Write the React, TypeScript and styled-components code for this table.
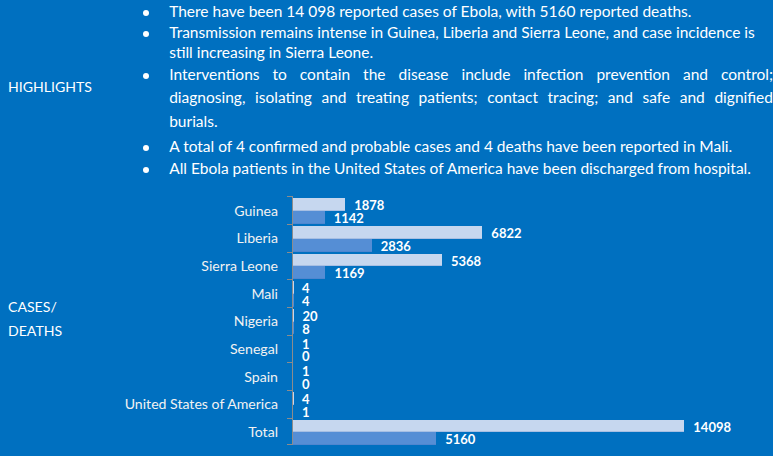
import styled, { createGlobalStyle } from 'styled-components';

const GlobalStyle = createGlobalStyle`
  html, body {
    margin: 0;
    padding: 0;
    background: #0070c0;
    overflow: hidden;
  }
  body {
    font-family: Lato, 'Open Sans', sans-serif;
    color: #ffffff;
  }
`;

const SCALE = 391.3 / 14098;

const cases: [string, number, number][] = [
  ['Guinea', 1878, 1142],
  ['Liberia', 6822, 2836],
  ['Sierra Leone', 5368, 1169],
  ['Mali', 4, 4],
  ['Nigeria', 20, 8],
  ['Senegal', 1, 0],
  ['Spain', 1, 0],
  ['United States of America', 4, 1],
  ['Total', 14098, 5160],
];

export default function App() {
  return (
    <Page>
      <GlobalStyle />
      <Section>
        <SideLabel $lift={2.85}>HIGHLIGHTS</SideLabel>
        <List>
          <Item $lh={20.5}>
            <Dot $lh={20.5} />
            <Text>
              <Line>There have been 14 098 reported cases of Ebola, with 5160 reported deaths.</Line>
            </Text>
          </Item>
          <Item $lh={20.5}>
            <Dot $lh={20.5} />
            <Text>
              <Line>Transmission remains intense in Guinea, Liberia and Sierra Leone, and case incidence is</Line>
              <Line>still increasing in Sierra Leone.</Line>
            </Text>
          </Item>
          <Item $lh={23.6} $gap={1.55}>
            <Dot $lh={23.6} />
            <Text>
              <Line $justify>Interventions to contain the disease include infection prevention and control;</Line>
              <Line $justify>diagnosing, isolating and treating patients; contact tracing; and safe and dignified</Line>
              <Line>burials.</Line>
            </Text>
          </Item>
          <Item $lh={22}>
            <Dot $lh={22} />
            <Text>
              <Line>A total of 4 confirmed and probable cases and 4 deaths have been reported in Mali.</Line>
            </Text>
          </Item>
          <Item $lh={22}>
            <Dot $lh={22} />
            <Text>
              <Line>All Ebola patients in the United States of America have been discharged from hospital.</Line>
            </Text>
          </Item>
        </List>
      </Section>

      <Section $top={17.3}>
        <SideLabel $lift={1.8}>
          CASES/
          <br />
          DEATHS
        </SideLabel>
        <Chart>
          {cases.map(([name, total, deaths], i) => (
            <Row key={name}>
              <Category>{name}</Category>
              <Plot $last={i === cases.length - 1}>
                <BarLine>
                  <Bar $kind="cases" style={{ width: total * SCALE }} />
                  <Value>{total}</Value>
                </BarLine>
                <BarLine>
                  <Bar $kind="deaths" style={{ width: deaths * SCALE }} />
                  <Value>{deaths}</Value>
                </BarLine>
              </Plot>
            </Row>
          ))}
        </Chart>
      </Section>
    </Page>
  );
}

const Page = styled.div`
  width: 773px;
  height: 456px;
  background: #0070c0;
  display: flex;
  flex-direction: column;
  overflow: hidden;
`;

const Section = styled.section<{ $top?: number }>`
  display: grid;
  grid-template-columns: 112px 1fr;
  padding-left: 8px;
  margin-top: ${(p) => p.$top ?? 0}px;
`;

const SideLabel = styled.div<{ $lift: number }>`
  align-self: center;
  font-size: 14.1px;
  line-height: 24px;
  padding-bottom: ${(p) => p.$lift * 2}px;
  white-space: nowrap;
`;

const List = styled.ul`
  list-style: none;
  margin: 0;
  padding: 1.35px 0 0 22.7px;
`;

const Item = styled.li<{ $lh: number; $gap?: number }>`
  display: flex;
  font-size: 15.5px;
  line-height: ${(p) => p.$lh}px;
  margin-bottom: ${(p) => p.$gap ?? 0}px;
`;

const Dot = styled.span<{ $lh: number }>`
  flex: 0 0 26.5px;

  &::before {
    content: '';
    display: block;
    width: 6px;
    height: 6px;
    border-radius: 50%;
    background: #ffffff;
    margin-top: ${(p) => p.$lh / 2 - 1.5}px;
  }
`;

const Text = styled.div`
  flex: 1;
  min-width: 0;
`;

const Line = styled.span<{ $justify?: boolean }>`
  display: block;
  white-space: nowrap;
  text-align: ${(p) => (p.$justify ? 'justify' : 'left')};
  text-align-last: ${(p) => (p.$justify ? 'justify' : 'left')};
`;

const Chart = styled.div`
  display: flex;
  flex-direction: column;
`;

const Row = styled.div`
  display: grid;
  grid-template-columns: 158px 1fr;
  column-gap: 14px;
  height: 27.67px;
`;

const Category = styled.div`
  align-self: center;
  text-align: right;
  font-size: 14.1px;
  color: #f2f2f2;
  white-space: nowrap;
`;

const Plot = styled.div<{ $last?: boolean }>`
  position: relative;
  border-left: 1px solid #8c8c8c;
  display: flex;
  flex-direction: column;
  padding-top: 2px;

  &::before {
    content: '';
    position: absolute;
    left: -6px;
    top: 0;
    width: 5px;
    height: 1px;
    background: #8c8c8c;
  }

  &::after {
    content: '';
    display: ${(p) => (p.$last ? 'block' : 'none')};
    position: absolute;
    left: -6px;
    bottom: 0;
    width: 5px;
    height: 1px;
    background: #8c8c8c;
  }
`;

const BarLine = styled.div`
  display: flex;
  align-items: center;
  height: 12.7px;
`;

const Bar = styled.div<{ $kind: 'cases' | 'deaths' }>`
  height: 100%;
  box-sizing: border-box;
  background: ${(p) => (p.$kind === 'cases' ? '#c6d7ef' : '#558ed5')};
  border-bottom: 1px solid ${(p) => (p.$kind === 'cases' ? '#a7bfe3' : '#4f86cf')};
`;

const Value = styled.span`
  margin-left: 9px;
  padding-top: 2px;
  font-size: 13px;
  font-weight: 700;
  line-height: 10.7px;
  white-space: nowrap;
`;
